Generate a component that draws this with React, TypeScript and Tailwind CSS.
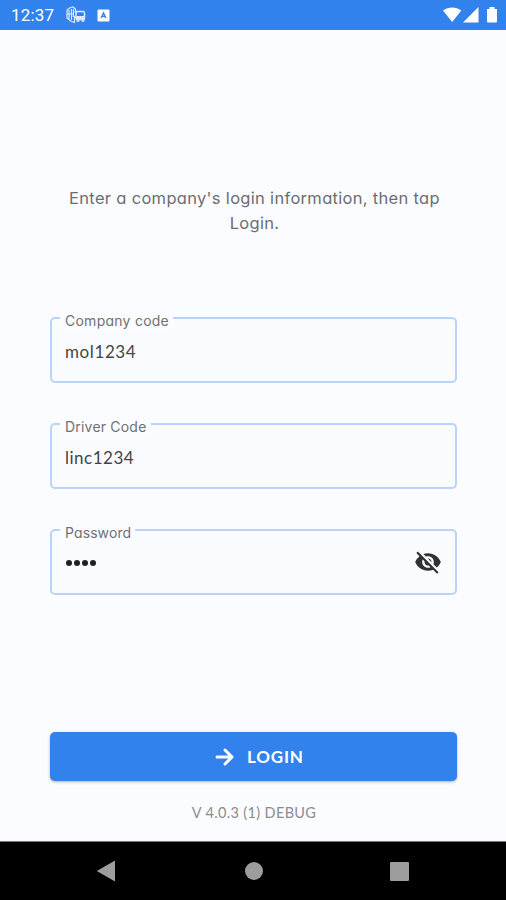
import React from "react";
import { MdVisibilityOff } from "react-icons/md";

type FieldProps = {
  label: string;
  labelWidth: string;
  labelClass: string;
  children: React.ReactNode;
};

function Field({ label, labelWidth, labelClass, children }: FieldProps) {
  return (
    <div className="relative flex h-[66px] items-center justify-between rounded-[5px] border-2 border-[#b9d3fa] bg-[#fafbfe] pr-[13px] pl-[13px]">
      <div className={`absolute -top-[9px] left-[8px] h-[20px] bg-[#fafcff] pl-[5px] text-[14px] leading-[22px] whitespace-nowrap text-[#707174] ${labelWidth}`}>
        <span className={`font-['Inter',sans-serif] [font-feature-settings:'cv11'] ${labelClass}`}>{label}</span>
      </div>
      {children}
    </div>
  );
}

export default function App() {
  return (
    <div className="flex h-[900px] w-[506px] flex-col overflow-hidden bg-[#fafcff]">
      <header className="flex h-[30px] shrink-0 items-center bg-[#3282ee] pr-[8px] pl-[11px] text-white">
        <span className="w-[54px] pt-[2px] font-['Roboto',sans-serif] text-[17px] tracking-[0.2px]">12:37</span>
        <svg className="h-[20px] w-[22px]" viewBox="0 0 22 20" fill="none" stroke="#dceaff" strokeWidth="1.2">
          <path d="M5.500 2.500 8 2l2.500 2v4M5.500 2.500 2 5v8l3.500 3 4 1.500V11M4 5v9M6.500 4v11M8.500 4v8M2 9h7" />
          <rect x="11" y="6.500" width="8.500" height="8" rx="1.5" fill="#3282ee" strokeWidth="1.500" />
          <path d="M11 11h9v3.500h-9z" fill="#dceaff" stroke="none" />
          <circle cx="13" cy="15.5" r="1" /><circle cx="18" cy="15.5" r="1" />
        </svg>
        <svg className="ml-[10px] h-[13px] w-[13px]" viewBox="0 0 13 13">
          <rect x="0.5" y="0.5" width="12" height="12" rx="1" fill="#fff" />
          <path d="M4.2 9 6.5 4 8.8 9M5 7.4h3" fill="none" stroke="#3a7cdd" strokeWidth="1.4" />
        </svg>
        <svg className="ml-auto h-[18px] w-[56px]" viewBox="0 0 56 18" fill="#fff">
          <path d="M1 4.600C6.300.5 13.900.5 19.300 4.600L10.200 16z" />
          <path d="M36.500 1v15.500H21z" />
          <path d="M45 3h2.500V1h5v2H55v12.500a1 1 0 0 1-1 1h-8a1 1 0 0 1-1-1z" />
        </svg>
      </header>

      <main className="flex flex-1 flex-col pr-[49px] pl-[50px]">
        <p className="mt-[156px] pl-[2px] text-center font-['Inter',sans-serif] text-[16.5px] leading-[25px] tracking-[0.31px] text-[#6d6e70] [font-feature-settings:'cv11']">
          Enter a company's login information, then tap<br />Login.
        </p>

        <form className="mt-[81px] flex flex-col gap-[40px]">
          <Field label="Company code" labelWidth="w-[113px]" labelClass="tracking-[0.25px]">
            <span className="pt-[3px] font-['Lato',sans-serif] text-[17px] tracking-[0.600px] text-[#434446]">mol1234</span>
          </Field>
          <Field label="Driver Code" labelWidth="w-[91px]" labelClass="tracking-[0.2px]">
            <span className="pt-[3px] font-['Lato',sans-serif] text-[17px] tracking-[0.500px] text-[#434446]">linc1234</span>
          </Field>
          <Field label="Password" labelWidth="w-[75px]" labelClass="tracking-[0.1px]">
            <span className="flex gap-[2px] pt-[1px] pl-[1px]">
              <i className="h-[6px] w-[6px] rounded-full bg-[#202124]" />
              <i className="h-[6px] w-[6px] rounded-full bg-[#202124]" />
              <i className="h-[6px] w-[6px] rounded-full bg-[#202124]" />
              <i className="h-[6px] w-[6px] rounded-full bg-[#202124]" />
            </span>
            <MdVisibilityOff className="h-[28px] w-[28px] text-[#303134]" />
          </Field>
        </form>

        <button className="mt-[137px] flex h-[49px] items-center rounded-[5px] bg-[#3282ee] pl-[165px] text-white shadow-[0_1px_3px_rgba(0,0,0,0.3)]">
          <svg className="h-[20px] w-[20px]" viewBox="0 0 20 20" fill="none" stroke="currentColor" strokeWidth="3" strokeLinecap="round" strokeLinejoin="round">
            <path d="M2 10h15M10 3l7 7-7 7" />
          </svg>
          <span className="ml-[12px] pt-[1px] font-['Lato',sans-serif] text-[17px] font-bold tracking-[0.8px]">LOGIN</span>
        </button>
        <p className="mt-[22px] pl-px text-center font-['Lato',sans-serif] text-[14.5px] leading-[20px] tracking-[0.35px] text-[#8b8c8f]">V 4.0.3 (1) DEBUG</p>
      </main>

      <nav className="flex h-[59px] shrink-0 items-center border-t border-[#777] bg-black pl-[96px]">
        <svg className="h-[22px] w-[20px]" viewBox="0 0 20 22" fill="#9d9d9d"><path d="M.8 11 19 .5v21z" /></svg>
        <span className="ml-[129px] h-[18px] w-[18px] rounded-full bg-[#9d9d9d]" />
        <span className="ml-[127px] h-[19px] w-[19px] rounded-[1px] bg-[#9d9d9d]" />
      </nav>
    </div>
  );
}
